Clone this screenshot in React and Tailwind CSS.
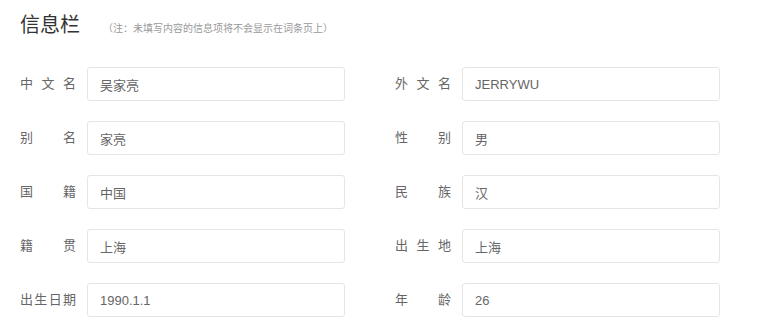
import React from 'react';

const fields = [
  ['中文名', '吴家亮', '外文名', 'JERRYWU'],
  ['别名', '家亮', '性别', '男'],
  ['国籍', '中国', '民族', '汉'],
  ['籍贯', '上海', '出生地', '上海'],
  ['出生日期', '1990.1.1', '年龄', '26'],
];

const Field = ({ label, value }) => (
  <div className="flex items-center">
    <label className="w-[56px] mr-[11px] text-[13px] text-[#666] [text-align-last:justify] whitespace-nowrap">{label}</label>
    <input
      className="w-[258px] h-[34px] px-[12px] text-[13px] text-[#666] bg-white border border-[#e5e5e5] rounded-[3px] outline-none"
      defaultValue={value}
    />
  </div>
);

const App = () => {
  return (
    <div className="w-[771px] h-[325px] bg-white px-[20px] pt-[10px] font-['Liberation_Sans','Noto_Sans_CJK_SC',sans-serif]">
      <div className="flex items-baseline h-[30px]">
        <h2 className="text-[20px] text-[#333] font-normal leading-[30px]">信息栏</h2>
        <span className="ml-[23px] text-[10px] text-[#999]">（注：未填写内容的信息项将不会显示在词条页上）</span>
      </div>
      <div className="grid grid-cols-[325px_325px] gap-x-[50px] gap-y-[20px] mt-[27px]">
        {fields.map(([l1, v1, l2, v2]) => (
          <React.Fragment key={l1}>
            <Field label={l1} value={v1} />
            <Field label={l2} value={v2} />
          </React.Fragment>
        ))}
      </div>
    </div>
  );
};

export default App;
